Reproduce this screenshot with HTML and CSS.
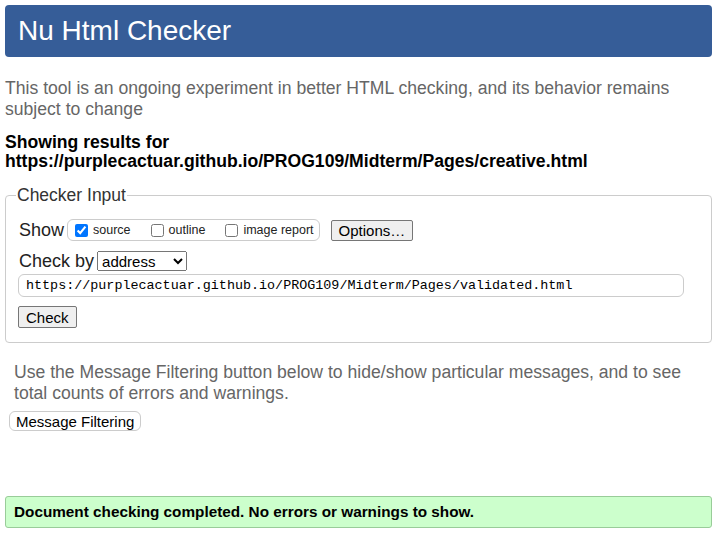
FILE: index.html
```html
<!DOCTYPE html>
<html lang="en">
<head>
<meta charset="utf-8">
<title>Nu Html Checker</title>
<link rel="stylesheet" href="styles.css">
</head>
<body>
<h1 class="banner">Nu Html Checker</h1>
<p class="intro">This tool is an ongoing experiment in better HTML checking, and its behavior remains subject to change</p>
<p class="results-for">Showing results for<br>https://purplecactuar.github.io/PROG109/Midterm/Pages/creative.html</p>
<fieldset class="checker">
  <legend class="checker-legend">Checker Input</legend>
  <div class="row">
    <span class="label">Show</span>
    <span class="show-group">
      <label class="opt"><input type="checkbox" checked> source</label>
      <label class="opt"><input type="checkbox"> outline</label>
      <label class="opt"><input type="checkbox"> image report</label>
    </span>
    <button class="btn options">Options…</button>
  </div>
  <div class="row">
    <span class="label">Check by</span>
    <select class="select"><option>address</option></select>
  </div>
  <input class="url" type="text" value="https://purplecactuar.github.io/PROG109/Midterm/Pages/validated.html">
  <button class="btn check">Check</button>
</fieldset>
<p class="filter-note">Use the Message Filtering button below to hide/show particular messages, and to see total counts of errors and warnings.</p>
<button class="btn filter">Message Filtering</button>
<p class="success">Document checking completed. No errors or warnings to show.</p>
</body>
</html>
```
FILE: styles.css
```css
html, body { background: #fff; }
body {
  margin: 0;
  padding: 5px 8px 0 5px;
  font-family: "Liberation Sans", Arial, sans-serif;
  color: #000;
}
.banner {
  margin: 0;
  height: 52px;
  display: flex;
  align-items: center;
  padding: 0 13px;
  background: #365d98;
  color: #fff;
  font-size: 28px;
  font-weight: normal;
  border-radius: 4px;
}
.intro {
  margin: 21px 0 0;
  color: #666;
  font-size: 17.6px;
  line-height: 20.5px;
}
.results-for {
  margin: 14px 0 0;
  font-weight: bold;
  font-size: 17.6px;
  line-height: 18.5px;
}
.checker {
  margin: 15px 0 0;
  padding: 12px 12px 14px 12px;
  border: 1px solid #ccc;
  border-radius: 4px;
}
.checker-legend {
  font-size: 17.5px;
  color: #333;
  padding: 0 1px;
  margin-left: -2px;
}
.row {
  display: flex;
  align-items: center;
  height: 24px;
  margin-bottom: 7px;
}
.label {
  font-size: 18px;
  color: #222;
  margin-right: 2px;
  padding-left: 1px;
}
.show-group {
  display: inline-flex;
  align-items: center;
  border: 1px solid #ccc;
  border-radius: 6px;
  height: 20px;
  padding: 0 5px 0 7px;
  margin-left: 1px;
}
.opt {
  font-size: 12.5px;
  display: inline-flex;
  align-items: center;
  color: #222;
  margin-right: 20px;
}
.opt:last-child { margin-right: 0; }
.opt input { margin: 0 5px 0 0; width: 13px; height: 13px; }
.btn {
  font-family: "Liberation Sans", Arial, sans-serif;
  font-size: 15px;
  background: #efefef;
  border: 1px solid #767676;
  border-radius: 2px;
  color: #000;
  padding: 1px 7px;
}
.options { margin-left: 11px; height: 21px; }
.select {
  font-family: "Liberation Sans", Arial, sans-serif;
  font-size: 15px;
  width: 90px;
  height: 20px;
  margin-left: 1px;
}
.url {
  display: block;
  width: 666px;
  box-sizing: border-box;
  height: 23px;
  font-family: "Liberation Mono", monospace;
  font-size: 13.4px;
  padding: 0 7px;
  border: 1px solid #ccc;
  border-radius: 6px;
  margin: -6px 0 9px 0;
}
.check { height: 22px; margin-left: 0; }
.filter-note {
  margin: 19px 0 0 9px;
  color: #666;
  font-size: 17.6px;
  line-height: 21px;
}
.filter {
  margin: 7px 0 0 4px;
  background: #fff;
  border: 1px solid #ccc;
  border-radius: 6px;
  height: 20px;
  padding: 0 6px;
}
.success {
  margin: 65px 0 0;
  background: #ccffcc;
  border: 1px solid #99cc99;
  border-radius: 3px;
  padding: 0 8px;
  height: 30px;
  display: flex;
  align-items: center;
  font-weight: bold;
  font-size: 15.3px;
}
```
